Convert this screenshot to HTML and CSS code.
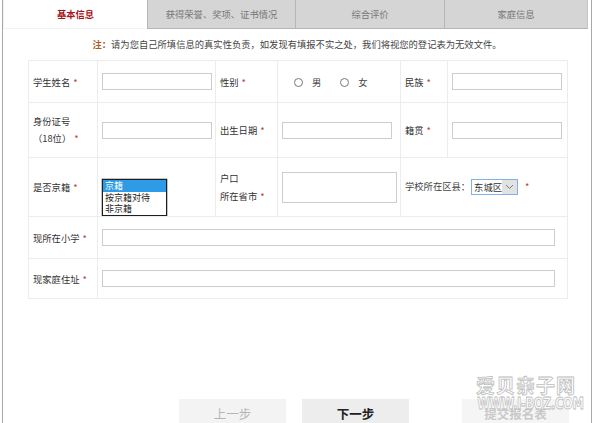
FILE: index.html
```html
<!DOCTYPE html>
<html lang="zh-CN">
<head>
<meta charset="utf-8">
<title>基本信息</title>
<link rel="stylesheet" href="styles.css">
</head>
<body>
<div class="page">
  <div class="tabs">
    <div class="tab active">基本信息</div>
    <div class="tab t2">获得荣誉、奖项、证书情况</div>
    <div class="tab t3">综合评价</div>
    <div class="tab t4">家庭信息</div>
  </div>
  <p class="note"><b>注：</b>请为您自己所填信息的真实性负责，如发现有填报不实之处，我们将视您的登记表为无效文件。</p>
  <table class="form">
    <colgroup>
      <col class="c1"><col class="c2"><col class="c3"><col class="c4"><col class="c5"><col class="c6">
    </colgroup>
    <tr class="r1">
      <td>学生姓名<span class="req">*</span></td>
      <td><input class="field" type="text"></td>
      <td>性别<span class="req">*</span></td>
      <td class="radios"><span class="radio"></span><span class="rl">男</span><span class="radio"></span><span class="rl">女</span></td>
      <td>民族<span class="req">*</span></td>
      <td><input class="field" type="text"></td>
    </tr>
    <tr class="r2">
      <td class="two">身份证号<br>（18位）<span class="req">*</span></td>
      <td><input class="field" type="text"></td>
      <td>出生日期<span class="req">*</span></td>
      <td><input class="field" type="text"></td>
      <td>籍贯<span class="req">*</span></td>
      <td><input class="field" type="text"></td>
    </tr>
    <tr class="r3">
      <td>是否京籍<span class="req">*</span></td>
      <td class="lbcell">
        <div class="listbox">
          <div class="opt sel">京籍</div>
          <div class="opt">按京籍对待</div>
          <div class="opt">非京籍</div>
        </div>
      </td>
      <td class="two tall">户口<br>所在省市<span class="req">*</span></td>
      <td><div class="area"></div></td>
      <td colspan="2" class="district">学校所在区县：<span class="select"><span class="sv">东城区</span><span class="arrow"><svg width="9" height="6" viewBox="0 0 9 6"><path d="M1 1 L4.5 4.5 L8 1" fill="none" stroke="#7a7a7a" stroke-width="1"/></svg></span></span><span class="req star">*</span></td>
    </tr>
    <tr class="r4">
      <td>现所在小学<span class="req">*</span></td>
      <td colspan="5"><input class="field wide" type="text"></td>
    </tr>
    <tr class="r5">
      <td>现家庭住址<span class="req">*</span></td>
      <td colspan="5"><input class="field wide" type="text"></td>
    </tr>
  </table>
  <div class="actions">
    <div class="btn prev">上一步</div>
    <div class="btn next">下一步</div>
    <div class="btn submit">提交报名表</div>
  </div>
  <div class="watermark">
    <div class="wm1">爱贝亲子网</div>
    <div class="wm2">www.i-bqz.com</div>
  </div>
</div>
</body>
</html>
```
FILE: styles.css
```css
html, body {
  margin: 0;
  padding: 0;
  background: #fff;
}
body {
  width: 593px;
  height: 423px;
  overflow: hidden;
  font-family: "Noto Sans CJK SC", "Noto Sans", sans-serif;
  font-size: 9.3px;
  color: #333;
}
.page {
  position: relative;
  margin-left: 2px;
  width: 588px;
  height: 423px;
  border-left: 1px solid #a9a9a9;
  border-right: 1px solid #a9a9a9;
  overflow: hidden;
}
.tabs {
  display: flex;
  height: 29px;
}
.tab {
  box-sizing: border-box;
  height: 29px;
  line-height: 28px;
  text-align: center;
  color: #777;
  background: #d5d5d5;
  border-left: 1px solid #b5b5b5;
  border-bottom: 1px solid #b5b5b5;
}
.tab.active {
  width: 144px;
  background: #fff;
  color: #a3151b;
  font-weight: bold;
  border-left: 1px solid #f3f3f3;
  border-bottom: 1px solid #f3f3f3;
}
.t2 { width: 148px; }
.t3 { width: 149px; }
.t4 { width: 144px; border-right: 1px solid #c4c4c4; }
.note {
  margin: 0;
  height: 31px;
  line-height: 31px;
  text-align: center;
  color: #444;
}
.note b {
  color: #b0591f;
}
.form {
  margin-left: 25px;
  width: 539px;
  table-layout: fixed;
  border-collapse: collapse;
}
.c1 { width: 69px; }
.c2 { width: 118px; }
.c3 { width: 62px; }
.c4 { width: 123px; }
.c5 { width: 47px; }
.c6 { width: 120px; }
.form td {
  border: 1px solid #ececec;
  padding: 0 4px;
  vertical-align: middle;
  white-space: nowrap;
}
.r1 { height: 42px; }
.r2 { height: 55px; }
.r3 { height: 59px; }
.r4 { height: 42px; }
.r5 { height: 40px; }
.two { line-height: 17px; }
.tall { line-height: 18px; }
.req {
  color: #b9433f;
  margin-left: 3px;
}
.field {
  display: block;
  box-sizing: border-box;
  width: 110px;
  height: 17px;
  margin: 0;
  padding: 0;
  border: 1px solid #cdcdcd;
  background: #fff;
}
.field.wide {
  width: 453px;
}
.radios {
  padding-left: 16px !important;
}
.radio {
  display: inline-block;
  box-sizing: border-box;
  width: 9px;
  height: 9px;
  border: 1px solid #777;
  border-radius: 50%;
  vertical-align: -1px;
}
.rl {
  margin-left: 9px;
  margin-right: 19px;
  color: #444;
}
.lbcell {
  vertical-align: top !important;
  padding-top: 21px !important;
}
.listbox {
  box-sizing: border-box;
  width: 65px;
  height: 37px;
  border: 1px solid #1e1e1e;
  background: #fff;
  box-shadow: 0 0 0 0.5px #888;
  overflow: hidden;
}
.opt {
  height: 11.6px;
  line-height: 11.6px;
  font-size: 9px;
  padding-left: 2px;
  color: #222;
  overflow: hidden;
}
.opt.sel {
  background: #2e9be6;
  color: #fff;
}
.area {
  box-sizing: border-box;
  width: 115px;
  height: 31px;
  border: 1px solid #cdcdcd;
}
.district {
  color: #444;
}
.select {
  display: inline-flex;
  box-sizing: border-box;
  width: 47px;
  height: 16px;
  margin-left: 1px;
  border: 1px solid #7fb2e6;
  vertical-align: middle;
  background: #fff;
}
.sv {
  flex: 1;
  line-height: 14px;
  padding-left: 2px;
  color: #333;
}
.arrow {
  width: 15px;
  background: #e2e2e2;
  display: flex;
  align-items: center;
  justify-content: center;
}
.star {
  margin-left: 7px;
}
.actions {
  display: flex;
  margin-top: 100px;
  padding-left: 176px;
}
.btn {
  width: 107px;
  height: 30px;
  line-height: 30px;
  text-align: center;
  font-size: 12.5px;
  background: #f0f0f0;
}
.prev {
  color: #b5b5b5;
  background: #f3f3f3;
}
.next {
  margin-left: 16px;
  color: #222;
  font-weight: bold;
  background: #ededed;
}
.submit {
  margin-left: 53px;
  color: #c9c9c9;
  background: #f5f5f5;
  font-weight: bold;
}
.watermark {
  position: absolute;
  left: 462px;
  top: 374px;
  width: 122px;
  text-align: center;
  pointer-events: none;
  white-space: nowrap;
}
.wm1 {
  font-size: 19px;
  line-height: 22px;
  letter-spacing: 1px;
  color: rgba(255, 255, 255, 0.5);
  -webkit-text-stroke: 0.8px #bdbdbd;
  font-weight: bold;
}
.wm2 {
  font-family: "DejaVu Sans Condensed", "Liberation Sans", sans-serif;
  font-size: 16px;
  line-height: 16px;
  font-weight: bold;
  text-transform: uppercase;
  letter-spacing: -0.5px;
  color: rgba(255, 255, 255, 0.5);
  -webkit-text-stroke: 0.8px #bdbdbd;
  transform: scaleX(0.8);
}
```
